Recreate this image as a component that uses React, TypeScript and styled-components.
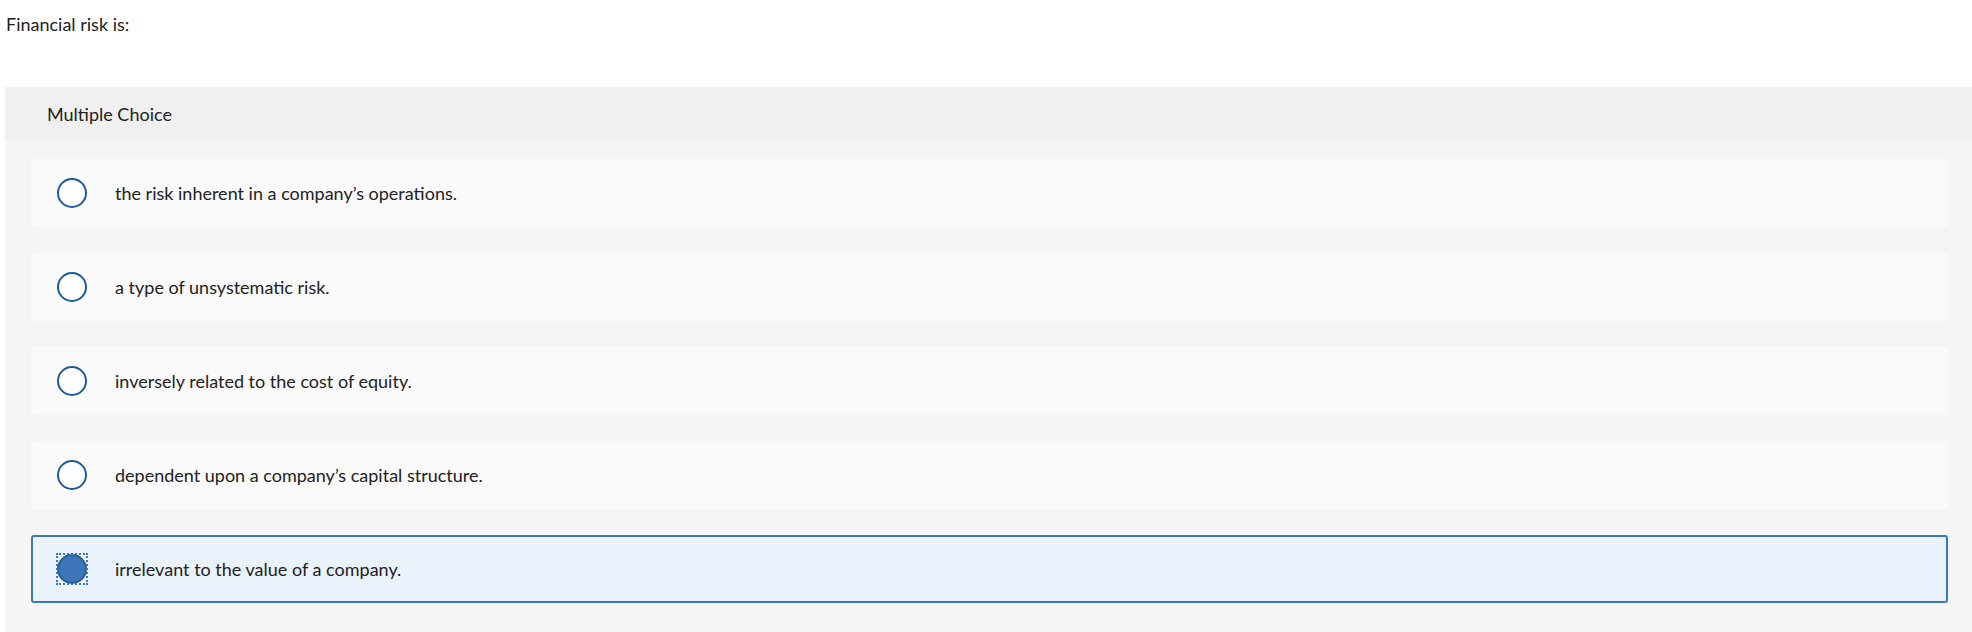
import React from "react";
import styled, { createGlobalStyle } from "styled-components";

const Global = createGlobalStyle`
  html, body { margin: 0; padding: 0; background: #ffffff; }
  body { font-family: "Lato", "Liberation Sans", sans-serif; color: #222222; }
`;

const Page = styled.div`
  padding: 0 0 0 5px;
`;

const Question = styled.p`
  margin: 0;
  padding: 12px 0 0 1px;
  height: 87px;
  box-sizing: border-box;
  font-size: 18px;
  line-height: 24px;
`;

const Panel = styled.section`
  background: #f5f5f5;
  padding-bottom: 30px;
`;

const PanelHeader = styled.div`
  height: 53px;
  background: #f0f0f0;
  display: flex;
  align-items: center;
  padding-left: 42px;
  font-size: 18px;
`;

const List = styled.div`
  display: flex;
  flex-direction: column;
  gap: 26px;
  padding: 19px 24px 0 26px;
`;

const Option = styled.label<{ $selected?: boolean }>`
  display: flex;
  align-items: center;
  height: 68px;
  box-sizing: border-box;
  padding-left: ${(p) => (p.$selected ? 24 : 26)}px;
  border-radius: 3px;
  background: ${(p) => (p.$selected ? "#eaf2fb" : "#fafafa")};
  border: ${(p) => (p.$selected ? "2px solid #3b78bb" : "none")};
  font-size: 18px;
  cursor: pointer;
`;

const RadioWrap = styled.span<{ $focused?: boolean }>`
  width: 32px;
  height: 32px;
  margin-left: -1px;
  margin-right: 27px;
  box-sizing: border-box;
  display: flex;
  align-items: center;
  justify-content: center;
  outline: ${(p) => (p.$focused ? "2px dotted #3b78bb" : "none")};
  outline-offset: -2px;
`;

const Radio = styled.span<{ $checked?: boolean }>`
  width: 30px;
  height: 30px;
  box-sizing: border-box;
  border-radius: 50%;
  border: 2px solid ${(p) => (p.$checked ? "#2a5e98" : "#1f5a96")};
  background: ${(p) => (p.$checked ? "#3d76b8" : "#ffffff")};
`;

const OptionText = styled.span`
  line-height: 24px;
`;

const options = [
  "the risk inherent in a company\u2019s operations.",
  "a type of unsystematic risk.",
  "inversely related to the cost of equity.",
  "dependent upon a company\u2019s capital structure.",
  "irrelevant to the value of a company.",
];

export default function App() {
  const selected = 4;
  return (
    <>
      <Global />
      <Page>
        <Question>Financial risk is:</Question>
        <Panel>
          <PanelHeader>Multiple Choice</PanelHeader>
          <List>
            {options.map((o, i) => (
              <Option key={i} $selected={i === selected}>
                <RadioWrap $focused={i === selected}>
                  <Radio $checked={i === selected} />
                </RadioWrap>
                <OptionText>{o}</OptionText>
              </Option>
            ))}
          </List>
        </Panel>
      </Page>
    </>
  );
}
